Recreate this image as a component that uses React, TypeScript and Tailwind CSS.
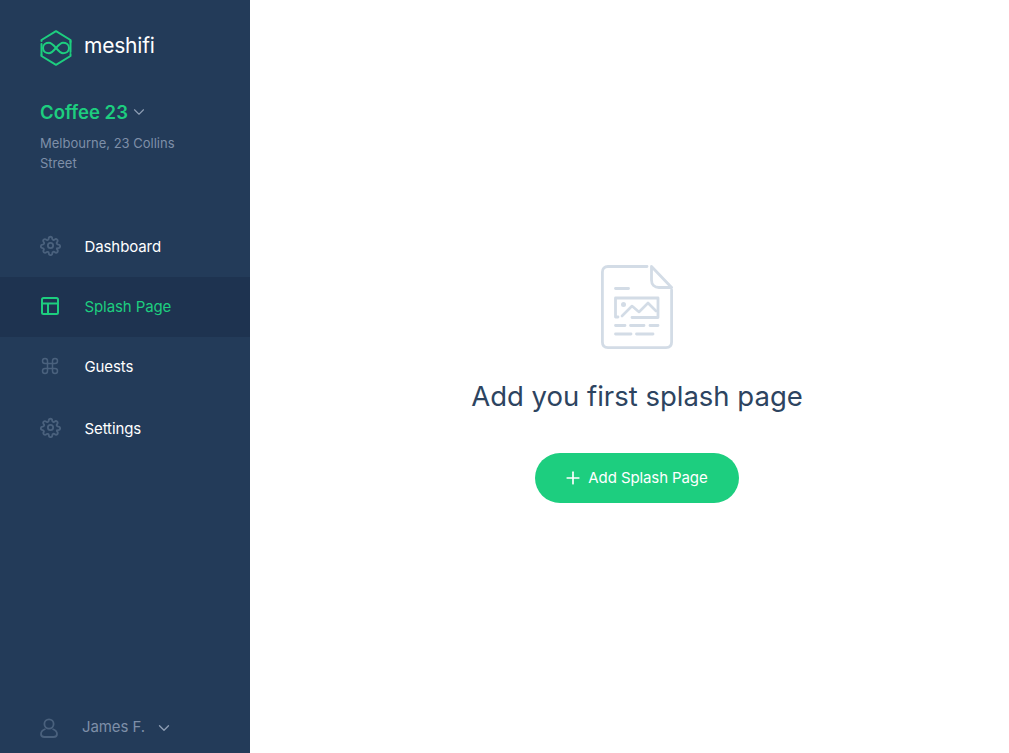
import { Command, ChevronDown, Plus } from "lucide-react";

function Logo() {
  return (
    <svg width="32" height="36" viewBox="0 0 32 36" fill="none" stroke="#1dce7f" strokeWidth="2" strokeLinejoin="round" strokeLinecap="round">
      <path d="M1.500 11 V10 L16 1.200 L30.500 10 V12 M30.500 24 V26 L16 34.800 L1.500 26 V25" />
      <path d="M3 18 C3 14.500 6 12.800 9 12.800 C14 12.800 18 23.200 23 23.200 C26 23.200 29 21.500 29 18 C29 14.500 26 12.800 23 12.800 C18 12.800 14 23.200 9 23.200 C6 23.200 3 21.500 3 18 Z" />
      <path d="M1.500 14 V25 M30.500 11 V22" />
    </svg>
  );
}

function Gear() {
  return (
    <svg width="21" height="21" viewBox="0 0 24 24" fill="none" stroke="#4a617d" strokeWidth="2.100" strokeLinecap="round" strokeLinejoin="round">
      <circle cx="12" cy="12" r="3" />
      <path d="M19.400 15a1.650 1.650 0 0 0 .33 1.820l.06.06a2 2 0 1 1-2.830 2.830l-.06-.06a1.650 1.650 0 0 0-2.820 1.170V21a2 2 0 1 1-4 0v-.09a1.650 1.650 0 0 0-2.820-1.170l-.06.06a2 2 0 1 1-2.830-2.830l.06-.06A1.650 1.650 0 0 0 3.090 15H3a2 2 0 1 1 0-4h.09a1.650 1.650 0 0 0 1.170-2.820l-.06-.06a2 2 0 1 1 2.830-2.830l.06.06A1.650 1.650 0 0 0 9.910 4.180V4a2 2 0 1 1 4 0v.09a1.650 1.650 0 0 0 2.820 1.170l.06-.06a2 2 0 1 1 2.830 2.830l-.06.06a1.650 1.650 0 0 0 1.170 2.820H21a2 2 0 1 1 0 4h-.09a1.650 1.650 0 0 0-1.510 1z" />
    </svg>
  );
}

function LayoutIcon() {
  return (
    <svg width="20" height="20" viewBox="0 0 20 20" fill="none" stroke="#1dce7f" strokeWidth="2" strokeLinejoin="round">
      <rect x="2" y="2" width="16" height="16" rx="1.500" />
      <path d="M2 7.500 H18 M8 7.500 V18" />
    </svg>
  );
}

function UserIcon() {
  return (
    <svg width="18" height="20" viewBox="0 0 18 20" fill="none" stroke="#4a617d" strokeWidth="1.800">
      <circle cx="9" cy="6" r="4.600" />
      <path d="M5.500 11 C2.500 12 1 14 1 16 C1 18 2.500 19 4.500 19 H13.500 C15.500 19 17 18 17 16 C17 14 15.500 12 12.500 11" />
    </svg>
  );
}

function DocIcon() {
  return (
    <svg width="72" height="84" viewBox="0 0 72 84" fill="none" stroke="#d3dce6" strokeWidth="2.800" strokeLinecap="round" strokeLinejoin="round">
      <path d="M46 1.500 H7 C3.500 1.500 1.400 3.700 1.400 7 V77 C1.400 80.500 3.500 82.600 7 82.600 H65 C68.500 82.600 70.600 80.500 70.600 77 V25" />
      <path d="M50.500 1.500 L70.600 22.500 H58 C53.500 22.500 50.500 19.500 50.500 15 Z" />
      <path d="M14.500 23.500 H27.500" />
      <path d="M14.500 33 H57 V52.500 H31 M14.500 33 V52 H17" />
      <circle cx="22.500" cy="39.500" r="2.500" fill="#d3dce6" stroke="none" />
      <path d="M21 51 L31 41 L38 47 L47 38 L55 46" strokeWidth="2.600" />
      <path d="M14.500 60.500 H24 M29.500 60.500 H43 M49 60.500 H57 M14.500 69 H30 M35.500 69 H52" />
    </svg>
  );
}

function NavItem({ icon, label, active, className = "" }: { icon: React.ReactNode; label: string; active?: boolean; className?: string }) {
  return (
    <div className={`flex items-center h-[60px] pl-10 ${active ? "bg-[#1e3350] text-[#1dce7f]" : "text-white"} ${className}`}>
      <span className="flex w-[44.500px] items-center pb-[3px]">{icon}</span>
      <span className="text-[15px] tracking-[-0.100px]">{label}</span>
    </div>
  );
}

export default function App() {
  return (
    <div className="flex h-[753px] w-full overflow-hidden bg-white font-['Inter','Open_Sans',sans-serif]">
      <aside className="flex h-full w-[250px] shrink-0 flex-col bg-[#233b59]">
        <div className="flex items-center gap-3 pl-10 pt-[30px]">
          <Logo />
          <span className="pb-[4px] text-[21px] leading-[32px] tracking-[-0.200px] text-white">meshifi</span>
        </div>
        <div className="mt-[31px] flex items-center pl-10">
          <span className="text-[18.500px] font-semibold leading-[30px] text-[#1dce7f]">Coffee 23</span>
          <ChevronDown size={18} strokeWidth={1.500} className="ml-[2px] text-[#8d9db3]" />
        </div>
        <p className="mt-[6px] w-[190px] pl-10 pr-2 text-[13px] leading-[20px] text-[#7e8fa8]">Melbourne, 23 Collins Street</p>
        <nav className="mt-[44px] flex flex-col">
          <NavItem icon={<Gear />} label="Dashboard" />
          <NavItem active icon={<LayoutIcon />} label="Splash Page" />
          <NavItem icon={<Command size={20} strokeWidth={1.800} className="text-[#4a617d]" />} label="Guests" />
          <NavItem className="mt-[2px]" icon={<Gear />} label="Settings" />
        </nav>
        <div className="mt-auto flex h-[53px] items-center pl-10 pt-[2px]">
          <UserIcon />
          <span className="ml-6 text-[15px] tracking-[-0.100px] text-[#7e8fa8]">James F.</span>
          <ChevronDown size={18} strokeWidth={1.800} className="ml-[10px] text-[#8d9db3]" />
        </div>
      </aside>
      <main className="flex w-[774px] shrink-0 flex-col items-center pt-[265px]">
        <DocIcon />
        <h1 className="mt-[27px] text-[27.500px] leading-[40px] text-[#2d4460]">Add you first splash page</h1>
        <button className="mt-[37px] flex h-[50px] w-[204px] items-center justify-center gap-[5px] rounded-full bg-[#1dce7f] pr-[3px] text-[15px] tracking-[-0.100px] text-white">
          <Plus size={20} strokeWidth={2} />
          Add Splash Page
        </button>
      </main>
    </div>
  );
}
